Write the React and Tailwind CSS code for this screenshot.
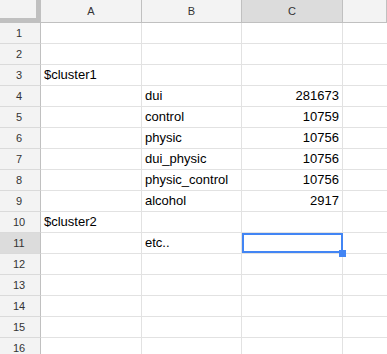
import React from "react";

const columns = ["A", "B", "C", ""];

const rows = [
  { n: 1 },
  { n: 2 },
  { n: 3, a: "$cluster1" },
  { n: 4, b: "dui", c: "281673" },
  { n: 5, b: "control", c: "10759" },
  { n: 6, b: "physic", c: "10756" },
  { n: 7, b: "dui_physic", c: "10756" },
  { n: 8, b: "physic_control", c: "10756" },
  { n: 9, b: "alcohol", c: "2917" },
  { n: 10, a: "$cluster2" },
  { n: 11, b: "etc..", selected: true },
  { n: 12 },
  { n: 13 },
  { n: 14 },
  { n: 15 },
  { n: 16 },
];

const App = () => {
  return (
    <div
      className="w-[387px] h-[354px] overflow-hidden bg-white text-black"
      style={{ fontFamily: '"Liberation Sans", Arial, sans-serif' }}
    >
      <div className="grid grid-cols-[41px_101px_100px_101px_1fr] grid-rows-[23px] auto-rows-[21px]">
        {/* corner */}
        <div className="relative bg-[#f3f3f3] border-r border-b border-[#c0c0c0]">
          <div className="absolute right-0 top-0 bottom-0 w-[4px] bg-[#c0c0c0]" />
          <div className="absolute left-0 right-0 bottom-0 h-[4px] bg-[#c0c0c0]" />
        </div>
        {columns.map((col, i) => (
          <div
            key={i}
            className={`flex items-center justify-center border-r border-b border-[#c0c0c0] text-[11px] text-[#333] ${
              col === "C" ? "bg-[#dcdcdc]" : "bg-[#f3f3f3]"
            }`}
          >
            {col}
          </div>
        ))}

        {rows.map((row) => (
          <React.Fragment key={row.n}>
            <div
              className={`flex items-center justify-center border-r border-r-[#c0c0c0] border-b border-b-[#dadada] text-[11px] text-[#333] pr-[2px] ${
                row.selected ? "bg-[#dcdcdc]" : "bg-[#f3f3f3]"
              }`}
            >
              {row.n}
            </div>
            <div className="flex items-center px-[3px] border-r border-b border-[#e2e2e2] text-[13px] whitespace-nowrap">
              {row.a}
            </div>
            <div className="flex items-center px-[3px] border-r border-b border-[#e2e2e2] text-[13px] whitespace-nowrap">
              {row.b}
            </div>
            <div className="relative flex items-center justify-end px-[3px] border-r border-b border-[#e2e2e2] text-[13px] whitespace-nowrap">
              {row.c}
              {row.selected && (
                <>
                  <div className="absolute z-10 left-0 top-0 right-[-1px] bottom-0 border-2 border-[#4285f4]" />
                  <div className="absolute z-10 left-[97px] top-[17px] w-[7px] h-[7px] bg-[#4285f4]" />
                </>
              )}
            </div>
            <div className="border-b border-[#e2e2e2]" />
          </React.Fragment>
        ))}
      </div>
    </div>
  );
};

export default App;
